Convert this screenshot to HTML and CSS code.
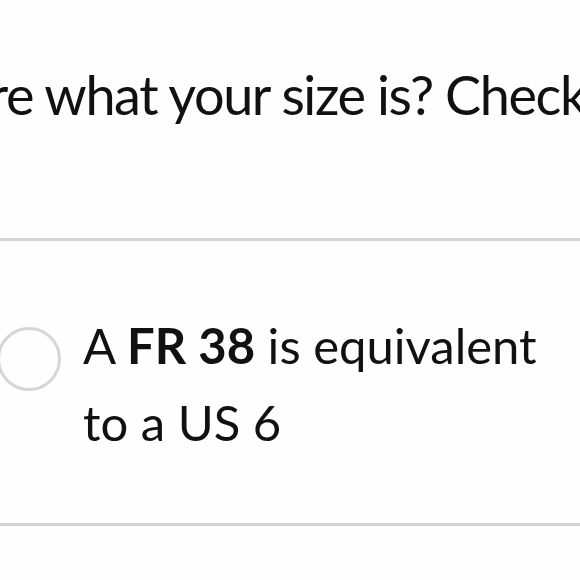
FILE: index.html
```html
<!DOCTYPE html>
<html lang="en">
<head>
  <meta charset="UTF-8">
  <meta name="viewport" content="width=device-width, initial-scale=1.0">
  <title>Size Guide</title>
  <link rel="stylesheet" href="styles.css">
</head>
<body>
  <section class="size-help">
    <p class="question">Not sure what your size is? Check our size guide</p>
  </section>

  <div class="option">
    <span class="radio"></span>
    <p class="option-text">A <strong>FR 38</strong> is equivalent to a US 6</p>
  </div>
</body>
</html>
```

FILE: styles.css
```css
body {
  margin: 0;
  font-family: Lato, 'Noto Sans', sans-serif;
  background-color: #fefefe;
  color: #111;
  overflow: hidden;
  width: 580px;
  height: 580px;
}
.size-help {
  padding-top: 59px;
  height: 179px;
  border-bottom: 3px solid #d3d3d3;
  overflow: hidden;
}
.question {
  margin: 0 0 0 -160px;
  font-size: 54px;
  line-height: 72px;
  letter-spacing: -1.4px;
  white-space: nowrap;
}
.option {
  display: flex;
  align-items: flex-start;
  gap: 22px;
  padding: 66px 0 62px 0;
  border-bottom: 3px solid #d3d3d3;
}
.radio {
  flex-shrink: 0;
  width: 58px;
  height: 58px;
  margin-top: 20px;
  margin-left: -3px;
  border: 3px solid #d6d6d6;
  border-radius: 50%;
}
.option-text {
  margin: 0;
  width: 475px;
  font-size: 49px;
  line-height: 77px;
}
.option-text strong {
  font-weight: 700;
}
```
